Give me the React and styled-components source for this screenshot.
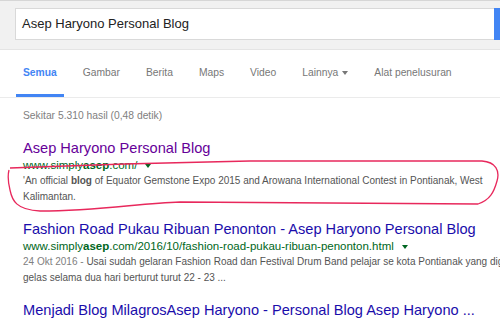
import React from 'react';
import styled, { createGlobalStyle } from 'styled-components';

const GlobalStyle = createGlobalStyle`
    html, body {
        margin: 0;
        padding: 0;
        background: #fff;
        overflow: hidden;
    }
    body {
        font-family: "Liberation Sans", Arial, sans-serif;
    }
`;

const Page = styled.div`
    position: relative;
    width: 500px;
    height: 319px;
    overflow: hidden;
`;

const Header = styled.div`
    box-sizing: border-box;
    height: 50px;
    background: #f1f1f1;
    border-top: 1px solid #d6d6d6;
    border-bottom: 1px solid #e4e4e4;
    padding: 7px 0 0 15px;
    display: flex;
    align-items: flex-start;
`;

const SearchBox = styled.div`
    box-sizing: border-box;
    flex-shrink: 0;
    width: 479px;
    height: 32px;
    background: #fff;
    border: 1px solid #d9d9d9;
    border-right: none;
    padding-left: 6px;
    font-size: 13px;
    line-height: 30px;
    color: #222;
`;

const SearchButton = styled.div`
    flex-shrink: 0;
    width: 40px;
    height: 32px;
    background: #4285f4;
`;

const Tabs = styled.nav`
    display: flex;
    gap: 12px;
    padding-left: 16px;
    border-bottom: 1px solid #ebebeb;
`;

const Tab = styled.div`
    padding: 2px 7px 0;
    line-height: 42px;
    font-size: 10.3px;
    white-space: nowrap;
    color: ${(p) => (p.$active ? '#4285f4' : '#777')};
    font-weight: ${(p) => (p.$active ? 'bold' : 'normal')};
    border-bottom: 3px solid ${(p) => (p.$active ? '#4285f4' : 'transparent')};
`;

const Caret = styled.span`
    display: inline-block;
    margin-left: ${(p) => p.$gap || 4}px;
    vertical-align: middle;
    border-top: 4px solid ${(p) => p.$color || '#777'};
    border-left: 3px solid transparent;
    border-right: 3px solid transparent;
`;

const Results = styled.div`
    padding: 10px 0 0 23px;
`;

const Stats = styled.div`
    font-size: 10.3px;
    line-height: 16px;
    color: #808080;
`;

const Result = styled.div`
    margin-top: 15px;
`;

const Title = styled.div`
    font-size: 14.6px;
    line-height: 18px;
    white-space: nowrap;
    color: ${(p) => (p.$visited ? '#660099' : '#1a0dab')};
`;

const Url = styled.div`
    font-size: 11.5px;
    line-height: 16px;
    color: #006621;
    white-space: nowrap;
`;

const Snippet = styled.div`
    font-size: 10px;
    line-height: 16px;
    color: #545454;
    white-space: nowrap;
`;

const Date = styled.span`
    color: #808080;
`;

const Scribble = styled.svg`
    position: absolute;
    left: 0;
    top: 0;
    pointer-events: none;
`;

const tabs = ['Semua', 'Gambar', 'Berita', 'Maps', 'Video'];

export default function App() {
    return (
        <Page>
            <GlobalStyle />
            <Header>
                <SearchBox>Asep Haryono Personal Blog</SearchBox>
                <SearchButton />
            </Header>

            <Tabs>
                {tabs.map((t, i) => (
                    <Tab key={t} $active={i === 0}>
                        {t}
                    </Tab>
                ))}
                <Tab>
                    Lainnya
                    <Caret />
                </Tab>
                <Tab>Alat penelusuran</Tab>
            </Tabs>

            <Results>
                <Stats>Sekitar 5.310 hasil (0,48 detik)</Stats>

                <Result>
                    <Title $visited>Asep Haryono Personal Blog</Title>
                    <Url>
                        www.simply<b>asep</b>.com/
                        <Caret $color="#006621" $gap={8} />
                    </Url>
                    <Snippet>
                        'An official <b>blog</b> of Equator Gemstone Expo 2015 and Arowana
                        International Contest in Pontianak, West
                        <br />
                        Kalimantan.
                    </Snippet>
                </Result>

                <Result>
                    <Title>Fashion Road Pukau Ribuan Penonton - Asep Haryono Personal Blog</Title>
                    <Url>
                        www.simply<b>asep</b>.com/2016/10/fashion-road-pukau-ribuan-penonton.html
                        <Caret $color="#006621" $gap={8} />
                    </Url>
                    <Snippet>
                        <Date>24 Okt 2016 - </Date>Usai sudah gelaran Fashion Road dan Festival
                        Drum Band pelajar se kota Pontianak yang digelar
                        <br />
                        gelas selama dua hari berturut turut 22 - 23 ...
                    </Snippet>
                </Result>

                <Result>
                    <Title>Menjadi Blog MilagrosAsep Haryono - Personal Blog Asep Haryono ...</Title>
                </Result>
            </Results>

            <Scribble width="500" height="319" viewBox="0 0 500 319">
                <path
                    d="M 10 168 C 60 166, 150 163, 250 161 L 482 161 C 496 162, 500 171, 497 181 C 494 192, 490 200, 478 204 L 180 202 C 140 203, 100 211, 40 211 C 16 210, 12 200, 10 190 Q 7 178, 9 170"
                    fill="none"
                    stroke="#e8285c"
                    strokeWidth="1.3"
                />
            </Scribble>
        </Page>
    );
}
